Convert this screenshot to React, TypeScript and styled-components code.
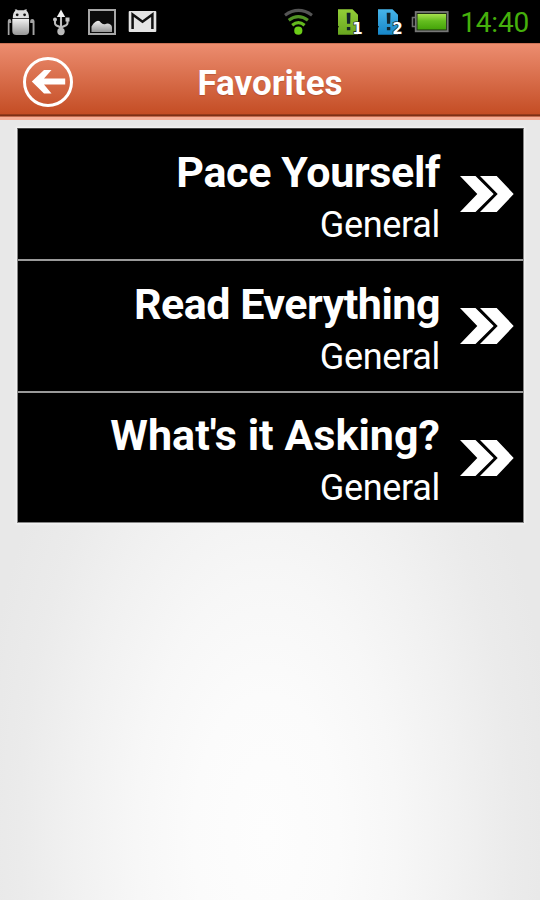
import React from "react";
import styled, { createGlobalStyle } from "styled-components";

const GlobalStyle = createGlobalStyle`
  * { box-sizing: border-box; }
  body { margin: 0; font-family: Roboto, "Liberation Sans", sans-serif; }
`;

const Screen = styled.div`
  display: flex;
  flex-direction: column;
  width: 540px;
  height: 900px;
  overflow: hidden;
  background: radial-gradient(ellipse 290px 560px at 266px 835px, #fdfdfd 0%, #fbfbfb 25%, #f7f7f7 45%, #f1f1f1 66%, #ebebeb 85%, #e8e8e8 100%);
`;

const StatusBar = styled.header`
  display: flex;
  justify-content: space-between;
  flex: none;
  height: 43px;
  padding-right: 11px;
  background: #000;
`;

const Group = styled.div`
  display: flex;
  gap: 11px;
`;

const StatusIcons = styled.svg`
  display: block;
  flex: none;
`;

const Clock = styled.time`
  color: #45b00c;
  font-size: 28px;
  line-height: 46px;
  letter-spacing: -0.2px;
`;

const TitleBar = styled.div`
  display: grid;
  grid-template-columns: 97px 346px 97px;
  align-items: center;
  height: 77px;
  flex: none;
  padding-bottom: 1px;
  border-bottom: 3px solid #f5ae98;
  background: linear-gradient(#a8563f 0, #ee8e6e 1px, #e9886a 6px, #c65028 68px, #c44d25 71px, #682711 72px, #8f381c 73px, #f19a7f 74px);
`;

const BackButton = styled.button`
  display: flex;
  justify-content: center;
  padding: 5px 1px 0 0;
  border: 0;
  background: none;
`;

const Title = styled.h1`
  margin: 8px 0 0;
  color: #fff;
  font-size: 35px;
  line-height: 40px;
  font-weight: 700;
  text-align: center;
  text-shadow: 0 1px 1px rgba(100, 35, 10, 0.25);
`;

const List = styled.ul`
  flex: none;
  width: 507px;
  margin: 8px 0 0 17px;
  padding: 0;
  list-style: none;
  border: 1px solid #858585;
  border-top-color: #444;
  box-shadow: 0 0 2px 1px #f5f5f5;
  background: #000;
`;

const Row = styled.li`
  display: flex;
  align-items: center;
  justify-content: flex-end;
  height: 131px;
  padding-right: 9px;
  color: #fff;

  &:first-child {
    height: 130px;
  }
  & + & {
    border-top: 2px solid #9a9a9a;
  }
  &:nth-child(2) {
    height: 132px;
  }
`;

const RowText = styled.div`
  display: flex;
  flex-direction: column;
  align-items: flex-end;
  margin-right: 20px;
  padding-top: 8px;
`;

const RowTitle = styled.div<{ $spacing: number }>`
  font-size: 43px;
  line-height: 53px;
  font-weight: 700;
  white-space: nowrap;
  letter-spacing: ${(p) => p.$spacing}px;
`;

const RowCategory = styled.div`
  font-size: 36px;
  line-height: 52px;
  letter-spacing: -0.3px;
`;

const items = [
  { title: "Pace Yourself", category: "General", spacing: -0.35 },
  { title: "Read Everything", category: "General", spacing: -0.5 },
  { title: "What's it Asking?", category: "General", spacing: 0.03 },
];

const Chevrons = () => (
  <svg width="54" height="38" viewBox="0 0 54 38" fill="#fff">
    <path d="M0 1h15.5l18.2 18-18.2 18H0l17.3-18z" />
    <path d="M20 1h16.7L53.7 19l-17 18H20l17.7-18z" />
  </svg>
);

const NoticeIcons = () => (
  <StatusIcons width="170" height="43" viewBox="0 0 170 43">
    <defs>
      <linearGradient id="silver" x1="0" y1="0" x2="0" y2="1">
        <stop offset="0" stopColor="#f1f1f1" />
        <stop offset="1" stopColor="#969696" />
      </linearGradient>
    </defs>
    <path d="M12.8 18.2c0-4 1-6.4 2.6-7.4l-.7-1.3h2.2l.8.7h6.4l.8-.7h2.2l-.7 1.3c1.6 1 2.6 3.4 2.6 7.4z" fill="#dedede" />
    <path d="M12.3 19h16.8v12q0 4-4 4h-8.8q-4 0-4-4z" fill="url(#silver)" />
    <path d="M7.8 21q0-2 1.7-2t1.7 2v2H9.5v12H7.8zM30.2 21q0-2 2-2t2.3 2v14h-1.9V23h-2.4z" fill="#a5a5a5" />
    <circle cx="17.2" cy="14.8" r="1.4" fill="#111" />
    <circle cx="24.6" cy="14.8" r="1.4" fill="#111" />

    <g fill="none" stroke="#bcbcbc" strokeWidth="2.1">
      <path d="M61 16v15M55 20v3.2q0 1.5 1.5 2.3l4.5 2 5-2.2q1.5-.8 1.5-2.3v-4" />
    </g>
    <path d="m61 9.5 4.2 7.5h-8.4z" fill="#f1f1f1" />
    <circle cx="55" cy="19.5" r="2" fill="#c8c8c8" />
    <path d="M65.5 17.5h4v4h-4z" fill="#c8c8c8" />
    <circle cx="61" cy="31.5" r="3.7" fill="#bababa" />

    <rect x="89" y="10" width="26" height="24" fill="#0b0b0b" stroke="#a7a7a7" strokeWidth="2" />
    <path d="M91.5 32v-5.5l2-3q2.5-2.8 4.5-2.8t3 2q2 1.8 4 1.6 2-1.3 4-.5 3 1.2 3 4V32z" fill="url(#silver)" />

    <rect x="128.7" y="11" width="27.6" height="21" rx="1" fill="#e4e4e4" />
    <path d="M132.6 29V14.5l9.9 7.3 9.9-7.3V29" fill="none" stroke="#111" strokeWidth="2.5" />
  </StatusIcons>
);

const SimCard = ({ x, color, label }: { x: number; color: string; label: string }) => (
  <g>
    <path d={`M${x} 9.2h14.5l5.5 5.5v20H${x}v-7l1-1-1-1z`} fill={color} />
    <path d={`M${x + 8.7} 12.7h3.8l-.3 11h-3.2zM${x + 8.9} 27h3.4v3.2h-3.4z`} fill="#12222a" />
    <text
      x={x + 19.5}
      y="34.2"
      textAnchor="middle"
      fontFamily="DejaVu Sans"
      fontSize="15"
      fontWeight="700"
      fill="#fff"
      stroke="#111"
      strokeWidth="1.2"
      paintOrder="stroke"
    >
      {label}
    </text>
  </g>
);

const DeviceIcons = () => (
  <StatusIcons width="170" height="43" viewBox="279 0 170 43">
    <defs>
      <linearGradient id="green" x1="0" y1="0" x2="0" y2="1">
        <stop offset="0" stopColor="#a8e14e" />
        <stop offset=".45" stopColor="#64bd1f" />
        <stop offset="1" stopColor="#44a309" />
      </linearGradient>
      <linearGradient id="simGreen" x1="0" y1="0" x2="0" y2="1">
        <stop offset="0" stopColor="#93cf38" />
        <stop offset="1" stopColor="#68a51f" />
      </linearGradient>
      <linearGradient id="simBlue" x1="0" y1="0" x2="0" y2="1">
        <stop offset="0" stopColor="#47b5eb" />
        <stop offset="1" stopColor="#1686c8" />
      </linearGradient>
    </defs>
    <g fill="none" strokeWidth="3.2">
      <path d="M285 15.2q13.5-9.5 27 0" stroke="#555" />
      <path d="M288.7 20.2q9.6-7 19.2 0" stroke="#519324" />
      <path d="M292.2 25.2q6.2-5 12.4 0" stroke="#63b91e" />
    </g>
    <circle cx="298.3" cy="30.7" r="4.1" fill="#6ccd18" />
    <SimCard x={338} color="url(#simGreen)" label="1" />
    <SimCard x={378} color="url(#simBlue)" label="2" />
    <path d="M415.5 17.5h-3v9h3" fill="none" stroke="#707070" strokeWidth="1.6" />
    <rect x="415.7" y="12" width="32" height="19.3" fill="#1d2b13" stroke="#777" strokeWidth="1.8" />
    <rect x="417.5" y="14" width="28.5" height="15.5" fill="url(#green)" />
  </StatusIcons>
);

export default function App() {
  return (
    <>
      <GlobalStyle />
      <Screen>
        <StatusBar>
          <NoticeIcons />
          <Group>
            <DeviceIcons />
            <Clock>14:40</Clock>
          </Group>
        </StatusBar>
        <TitleBar>
          <BackButton aria-label="Back">
            <svg width="52" height="52" viewBox="0 0 52 52">
              <circle cx="26" cy="26" r="23.5" fill="none" stroke="#fff" strokeWidth="3" />
              <path d="M9.8 25.6 22 14h7.5L22 22.6h21.2v6H22l7.5 9H22z" fill="#fff" />
            </svg>
          </BackButton>
          <Title>Favorites</Title>
        </TitleBar>
        <List>
          {items.map((item) => (
            <Row key={item.title}>
              <RowText>
                <RowTitle $spacing={item.spacing}>{item.title}</RowTitle>
                <RowCategory>{item.category}</RowCategory>
              </RowText>
              <Chevrons />
            </Row>
          ))}
        </List>
      </Screen>
    </>
  );
}
